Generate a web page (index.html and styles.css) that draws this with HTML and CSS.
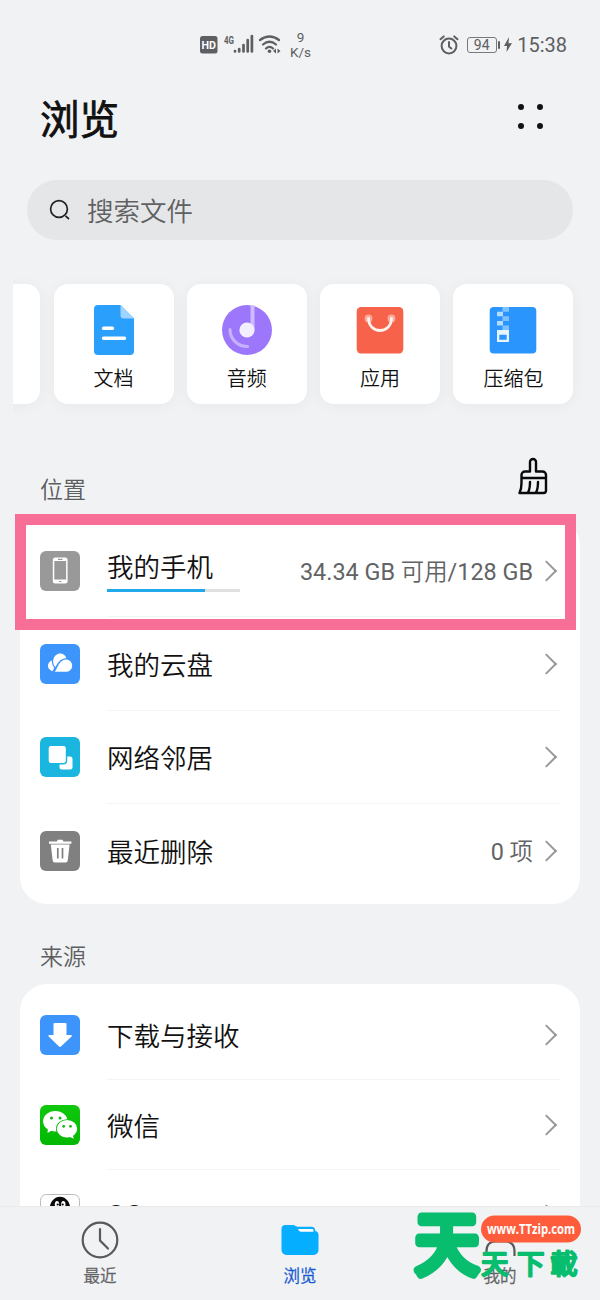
FILE: index.html
```html
<!DOCTYPE html>
<html lang="zh-CN">
<head>
<meta charset="utf-8">
<title>浏览</title>
<link rel="stylesheet" href="styles.css">
</head>
<body>
<div class="screen">
  <header class="status">
    <div class="status-left">
      <svg class="signals" width="83" height="24" viewBox="0 0 83 24" fill="#5d5f62">
        <rect x="1" y="3" width="17.500" height="17.500" rx="2.500"/>
        <text x="9.700" y="15.500" text-anchor="middle" class="hd" textLength="14.500" lengthAdjust="spacingAndGlyphs">HD</text>
        <text x="25" y="11" class="g4" textLength="10" lengthAdjust="spacingAndGlyphs">4G</text>
        <path d="M36 18v.5M40.200 16v2.500M44.500 12v6.500M48.700 7v11.500M52.900 3v15.500" fill="none" stroke="#5d5f62" stroke-width="2.700" stroke-linecap="round"/>
        <path d="M61 7Q70.500 0 80 7M64 11.500Q70.500 6 77 11.500M67 15.500Q70.500 12 74 15.500" fill="none" stroke="#5d5f62" stroke-width="2.200" stroke-linecap="round"/>
        <circle cx="70.500" cy="18.300" r="1.800"/>
        <path d="M74 18l3-2.500v5zM81.500 18l-3-2.500v5z"/>
      </svg>
      <div class="speed"><span>9</span><span>K/s</span></div>
    </div>
    <div class="status-right">
      <svg width="20" height="20" viewBox="0 0 20 20" fill="none" stroke="#5d5f62" stroke-width="2" stroke-linecap="round"><circle cx="10" cy="11" r="7.400"/><path d="M10 7v4.500l2.300 2M1.500 4.200l3.200-2.800M18.500 4.200l-3.200-2.800"/></svg>
      <div class="battery">94</div><i class="battery-tip"></i>
      <svg class="bolt" width="8" height="16" viewBox="0 0 8 16"><path d="M5 0L0 9h3L2.500 15 8 6.200H4.500z" fill="#5d5f62"/></svg>
      <span class="time">15:38</span>
    </div>
  </header>

  <div class="heading">
    <h1>浏览</h1>
    <div class="dots"><i></i><i></i><i></i><i></i></div>
  </div>

  <div class="search">
    <svg width="22" height="22" viewBox="0 0 22 22" fill="none" stroke="#222" stroke-width="1.700"><circle cx="10" cy="10" r="8.400"/><path d="M16.500 16.800l3.500 3.200"/></svg>
    <span>搜索文件</span>
  </div>

  <div class="carousel">
    <div class="tile partial"></div>
    <div class="tile">
      <svg width="50" height="50" viewBox="0 0 50 50"><path d="M9 0h22.500L45 13.500V46a4 4 0 0 1-4 4H9a4 4 0 0 1-4-4V4a4 4 0 0 1 4-4z" fill="#2a9ffc"/><path d="M31.500 0L45 13.500H34.500a3 3 0 0 1-3-3z" fill="#9ed4ff"/><path d="M14.500 23.200h9M14.500 33.300h21" stroke="#fff" stroke-width="3.400" stroke-linecap="round"/></svg>
      <span>文档</span>
    </div>
    <div class="tile">
      <svg width="50" height="50" viewBox="0 0 50 50"><circle cx="25" cy="25" r="25" fill="#9d77fb"/><path d="M28.500 .3h4V25h-4z" fill="#cfbcff"/><path d="M8 24.500A17 17 0 0 0 25.500 41.500" fill="none" stroke="#c7b1fe" stroke-width="3.200" stroke-linecap="round"/><circle cx="25" cy="25" r="7.600" fill="#f4efff"/></svg>
      <span>音频</span>
    </div>
    <div class="tile">
      <svg width="50" height="50" viewBox="0 0 50 50"><rect x="1.700" y="2" width="46.600" height="46.600" rx="4.500" fill="#f6634a"/><g fill="#fba99b"><circle cx="13.500" cy="13.500" r="3.900"/><circle cx="36.500" cy="13.500" r="3.900"/></g><path d="M13.500 13.500C14 29.500 36 29.500 36.500 13.500" fill="none" stroke="#fff3ef" stroke-width="2.800" stroke-linecap="round"/></svg>
      <span>应用</span>
    </div>
    <div class="tile">
      <svg width="50" height="50" viewBox="0 0 50 50"><rect x="1.700" y="2" width="46.600" height="46.600" rx="4" fill="#2a95fd"/><path d="M14.500 2h6.500v4.700h-6.500zM14.500 11.300h6.500v4.600h-6.500zM14.500 20.500h6.500V25h-6.500z" fill="#7fc0ff"/><path d="M9 6.700h6v4.600H9zM9 15.900h6v4.600H9z" fill="#b5dbff"/><path d="M9 25h12v12H9zm2.300 4.700v5h7.400v-5z" fill="#e6f4ff" fill-rule="evenodd"/></svg>
      <span>压缩包</span>
    </div>
  </div>

  <div class="section-title first">
    <h2>位置</h2>
    <svg width="30" height="38" viewBox="0 0 30 38" fill="none" stroke="#090909" stroke-width="2.400" stroke-linejoin="round" stroke-linecap="round"><path d="M7 14.500h5V5a3 3 0 0 1 6 0v9.500h6.500a3.500 3.500 0 0 1 3.500 3.500v15.500a2.500 2.500 0 0 1-2.500 2.500H1.500C3 33 3.500 30 3.500 26v-8A3.500 3.500 0 0 1 7 14.500M4 21h24M12 25c0 4.500-.3 7.500-2 10.500M20 25c0 4.500-.3 7.500-2 10.500"/></svg>
  </div>

  <section class="panel places">
    <div class="row">
      <svg class="icon" viewBox="0 0 40 40"><rect width="40" height="40" rx="6" fill="#999"/><rect x="12.800" y="6.500" width="14.800" height="26" rx="2.500" fill="#fff"/><path d="M14.300 10h11.800v18.500H14.300z" fill="#999"/><path d="M18 8.300h4.500M19 30.500h2.500" stroke="#999" stroke-width="1.200"/></svg>
      <div class="body"><div class="device"><span class="name">我的手机</span><div class="meter"><i></i></div></div><span class="detail">34.34 GB 可用/128 GB</span><i class="chevron"></i></div>
    </div>
    <div class="row">
      <svg class="icon" viewBox="0 0 40 40"><rect width="40" height="40" rx="6" fill="#3d95fc"/><g fill="#fff"><path d="M12 16.600C7 18 6.200 25 12.200 27.200 13.800 25.700 14.300 24.500 13.800 23 12.300 21 11.700 19 12 16.600z"/><path d="M13.200 16.300C14.500 8 24.500 7.500 26.300 14.200 20 14.700 18 18.500 15.300 23.300 13.500 21 13 19 13.200 16.300z"/><path d="M14.800 27.800C18 24 18.500 15.500 26.800 15.500a6.200 6.200 0 0 1 0 12.300z"/></g></svg>
      <div class="body"><span class="name">我的云盘</span><i class="chevron"></i></div>
    </div>
    <div class="row">
      <svg class="icon" viewBox="0 0 40 40"><rect width="40" height="40" rx="6" fill="#1bb6df"/><rect x="19.500" y="19.500" width="13" height="13" rx="2.500" fill="#fff"/><rect x="8" y="8.300" width="18.500" height="18.500" rx="3" fill="#fff" stroke="#1bb6df" stroke-width="1.400"/></svg>
      <div class="body"><span class="name">网络邻居</span><i class="chevron"></i></div>
    </div>
    <div class="row">
      <svg class="icon" viewBox="0 0 40 40"><rect width="40" height="40" rx="6" fill="#808080"/><path d="M9 10.500h8l.7-1.800h5l.7 1.800h8v2.300H9zM10.800 13.500h18.800l-1.900 16.300a2 2 0 0 1-2 1.700h-11a2 2 0 0 1-2-1.700z" fill="#fff"/><path d="M17.800 17v10.500M22.500 17v10.500" stroke="#808080" stroke-width="1.700"/></svg>
      <div class="body"><span class="name">最近删除</span><span class="detail">0 项</span><i class="chevron"></i></div>
    </div>
  </section>

  <div class="section-title second"><h2>来源</h2></div>

  <section class="panel sources">
    <div class="row">
      <svg class="icon" viewBox="0 0 40 40"><rect width="40" height="40" rx="6" fill="#3d95fc"/><path d="M14.500 8h11a1 1 0 0 1 1 1v11h4.500c1 0 1.300.8.600 1.500L21.200 31.300a1.600 1.600 0 0 1-2.400 0L8.700 21.500c-.7-.7-.4-1.500.6-1.500h4.200V9a1 1 0 0 1 1-1z" fill="#fff"/></svg>
      <div class="body"><span class="name">下载与接收</span><i class="chevron"></i></div>
    </div>
    <div class="row">
      <svg class="icon" viewBox="0 0 40 40"><defs><linearGradient id="wx" x2="0" y2="1"><stop stop-color="#10c80d"/><stop offset="1" stop-color="#02b802"/></linearGradient></defs><rect width="40" height="40" rx="6" fill="url(#wx)"/><path d="M8 23l-.5 5 5-3z" fill="#fff"/><ellipse cx="15.300" cy="16.300" rx="12.200" ry="10.300" fill="#fff"/><ellipse cx="27" cy="23.800" rx="11" ry="9.600" fill="#08bf07"/><ellipse cx="27" cy="23.800" rx="10.200" ry="8.800" fill="#fff"/><path d="M29 31.500l4.800 2.300-1.300-4.500z" fill="#fff"/><g fill="#13b512"><circle cx="11.500" cy="13" r="1.500"/><circle cx="20" cy="13" r="1.500"/><circle cx="23.700" cy="21.300" r="1.400"/><circle cx="30.500" cy="21.300" r="1.400"/></g></svg>
      <div class="body"><span class="name">微信</span><i class="chevron"></i></div>
    </div>
    <div class="row">
      <svg class="icon qq" viewBox="0 0 40 40"><rect x=".5" y=".5" width="39" height="39" rx="6" fill="#fff" stroke="#bbb"/><path d="M9.500 17C9-2 31-2 30.500 17v12h-21z" fill="#090909"/><g fill="#fff"><ellipse cx="17" cy="10.500" rx="2.200" ry="3.500"/><ellipse cx="23.300" cy="10.500" rx="2.200" ry="3.500"/></g><circle cx="17.700" cy="10.500" r="1.100"/><circle cx="22.700" cy="10.500" r="1.100"/></svg>
      <div class="body"><span class="name latin">QQ</span><i class="chevron"></i></div>
    </div>
  </section>

  <nav class="tabs">
    <div class="tab"><svg width="40" height="40" viewBox="0 0 40 40" fill="none" stroke="#57595c" stroke-width="2.200" stroke-linecap="round"><circle cx="20" cy="20" r="17.300"/><path d="M20 9v11.500l8 8"/></svg><span>最近</span></div>
    <div class="tab active"><svg width="40" height="40" viewBox="0 0 40 40"><path d="M5.500 5H13c2 0 3 1.800 4.800 1.800h13.500c2.700 0 4 1.500 4 4.200 2 .3 3.200 2 3.200 4v15a5 5 0 0 1-5 5h-27a5 5 0 0 1-5-5V9a4 4 0 0 1 4-4z" fill="#05aeff"/><path d="M18 9h14.500q1.300.2 1 2.700H20.500Q19 11.500 18 9z" fill="#fff"/></svg><span>浏览</span></div>
    <div class="tab"><svg width="40" height="40" viewBox="0 0 40 40" fill="none" stroke="#57595c" stroke-width="2.200"><circle cx="20" cy="10" r="7"/><path d="M6.500 36v-5q0-9.500 9.500-9.500h9q9.500 0 9.500 9.500v5"/></svg><span>我的</span></div>
  </nav>

  <div class="highlight"></div>
  <svg class="watermark" width="180" height="90" viewBox="0 0 180 90">
    <g class="mark">
      <text class="mark-big" transform="translate(7 61) scale(1 1.070)">天</text>
      <text class="mark-name" x="73 109 142" y="66">天下載</text>
    </g>
    <rect x="73" y="7.500" width="100" height="27" rx="13.500" fill="#ff5c3c"/>
    <text class="mark-url" x="79" y="26" textLength="88" lengthAdjust="spacingAndGlyphs">www.TTzip.com</text>
  </svg>
</div>
</body>
</html>
```
FILE: styles.css
```css
* { box-sizing: border-box; }
body { margin: 0; font-family: Roboto, "Noto Sans CJK SC DemiLight", "Noto Sans CJK SC", sans-serif; color: #111; background: #f1f2f5; }
h1, h2 { margin: 0; font-weight: 400; }
svg { display: block; flex: none; }
.screen { position: relative; display: flex; flex-direction: column; width: 600px; height: 1300px; overflow: hidden; background: #f1f2f4; }

.status { display: flex; justify-content: space-between; align-items: center; height: 88px; padding: 1px 33px 0 199px; color: #5d5f62; flex: none; }
.status-left, .status-right { display: flex; align-items: center; }
.hd { font: 700 10.500px Roboto, sans-serif; fill: #fff; }
.g4 { font: 700 10.500px Roboto, sans-serif; }
.speed { display: flex; flex-direction: column; align-items: center; margin-left: 8px; font-size: 13.500px; line-height: 15px; }
.battery { width: 30px; height: 16px; margin-left: 8px; border: 1.500px solid #77797c; border-radius: 3px; font-size: 14px; line-height: 14px; text-align: center; }
.battery-tip { width: 2px; height: 8px; margin-left: 1.500px; background: #5d5f62; border-radius: 1px; }
.bolt { margin-left: 4px; }
.time { margin-left: 5px; font-size: 20px; line-height: 24px; }

.heading { display: flex; justify-content: space-between; padding: 0 57px 0 40px; height: 92px; flex: none; }
.heading h1 { padding-top: 1px; font-size: 39.500px; line-height: 64px; -webkit-text-stroke: 1px #111; }
.dots { display: grid; grid-template-columns: 6px 6px; gap: 12.500px 13px; margin: 16px 0 0; align-content: start; }
.dots i { width: 6px; height: 6px; border-radius: 50%; background: #111; }

.search { display: flex; align-items: center; gap: 16px; height: 60px; margin: 0 27px; padding-left: 22px; border-radius: 30px; background: #e5e6e8; color: #5f6163; font-size: 26.500px; line-height: 40px; flex: none; }
.search span { padding-top: 3px; }

.carousel { display: flex; gap: 13.300px; height: 190px; margin-left: 13px; padding-top: 43.500px; overflow: hidden; flex: none; }
.tile { display: flex; flex-direction: column; align-items: center; width: 120px; height: 120.500px; padding-top: 21.500px; border-radius: 14px; background: #fff; box-shadow: 0 2px 16px rgba(0,0,0,.045); flex: none; font-size: 20px; }
.tile span { margin-top: 9px; line-height: 30px; }
.partial { margin-left: -92.800px; }

.section-title { display: flex; justify-content: space-between; align-items: flex-start; padding: 0 52px 0 40px; color: #5c5e61; flex: none; }
.section-title h2 { font-size: 23px; line-height: 34px; }
.first { height: 88px; padding-top: 27px; }
.first h2 { margin-top: 17px; }
.second { height: 80px; padding-top: 37px; }

.panel { margin: 0 20px; padding: 6px 20px 0; background: #fff; border-radius: 27px; flex: none; }
.places { height: 386px; }
.row { display: flex; align-items: center; height: 93.330px; gap: 27px; }
.icon { width: 40px; height: 40px; }
.qq { margin-top: -2px; }
.body { display: flex; align-items: center; flex: 1; height: 100%; border-bottom: 1px solid #f4f4f5; }
.row:last-child .body { border-bottom-color: transparent; }
.name { flex: 1; font-size: 26.500px; line-height: 38px; padding-top: 5px; }
.latin { line-height: 24px; padding: 0 0 1px; }
.device { flex: 1; padding-top: 5px; }
.device .name { display: block; line-height: 32px; margin-top: -1px; padding: 0; }
.meter { width: 133px; height: 3.500px; margin-top: 5px; background: #e1e1e2; }
.meter i { display: block; width: 73.500%; height: 100%; background: #22a9e9; }
.detail { font-size: 23.400px; line-height: 34px; color: #626365; white-space: nowrap; padding-top: 4px; }
.chevron { width: 15px; height: 15px; margin: 0 5px 0 7px; border: solid #999; border-width: 2px 2px 0 0; transform: translate(-1px, .5px) rotate(45deg); }
.sources { height: 300px; }
.sources .row { height: 90px; }

.tabs { position: absolute; left: 0; right: 0; bottom: 0; display: grid; grid-template-columns: repeat(3, 200px); height: 94px; padding: 13px 0 0; background: #f1f2f4; border-top: 1px solid #e9eaec; }
.tab { display: flex; flex-direction: column; align-items: center; color: #626466; font-size: 16.500px; line-height: 24px; }
.tab span { margin-top: 5px; -webkit-text-stroke: .3px; }
.tab.active { color: #1559d2; }
.tab:last-child circle { display: none; }

.highlight { position: absolute; left: 15px; top: 514px; width: 561px; height: 116px; border: 11px solid #f76f96; }

.watermark { position: absolute; left: 408px; top: 1208px; overflow: visible; font-family: "Noto Sans CJK TC", sans-serif; }
.mark { fill: #08bd6e; stroke: #08bd6e; stroke-linejoin: round; stroke-linecap: round; }
.mark-big { font-size: 64px; stroke-width: 8px; }
.mark-name { font-size: 27.500px; stroke-width: 2.200px; }
.mark-url { font: 700 13.500px "Open Sans", sans-serif; fill: #fff; }
```
